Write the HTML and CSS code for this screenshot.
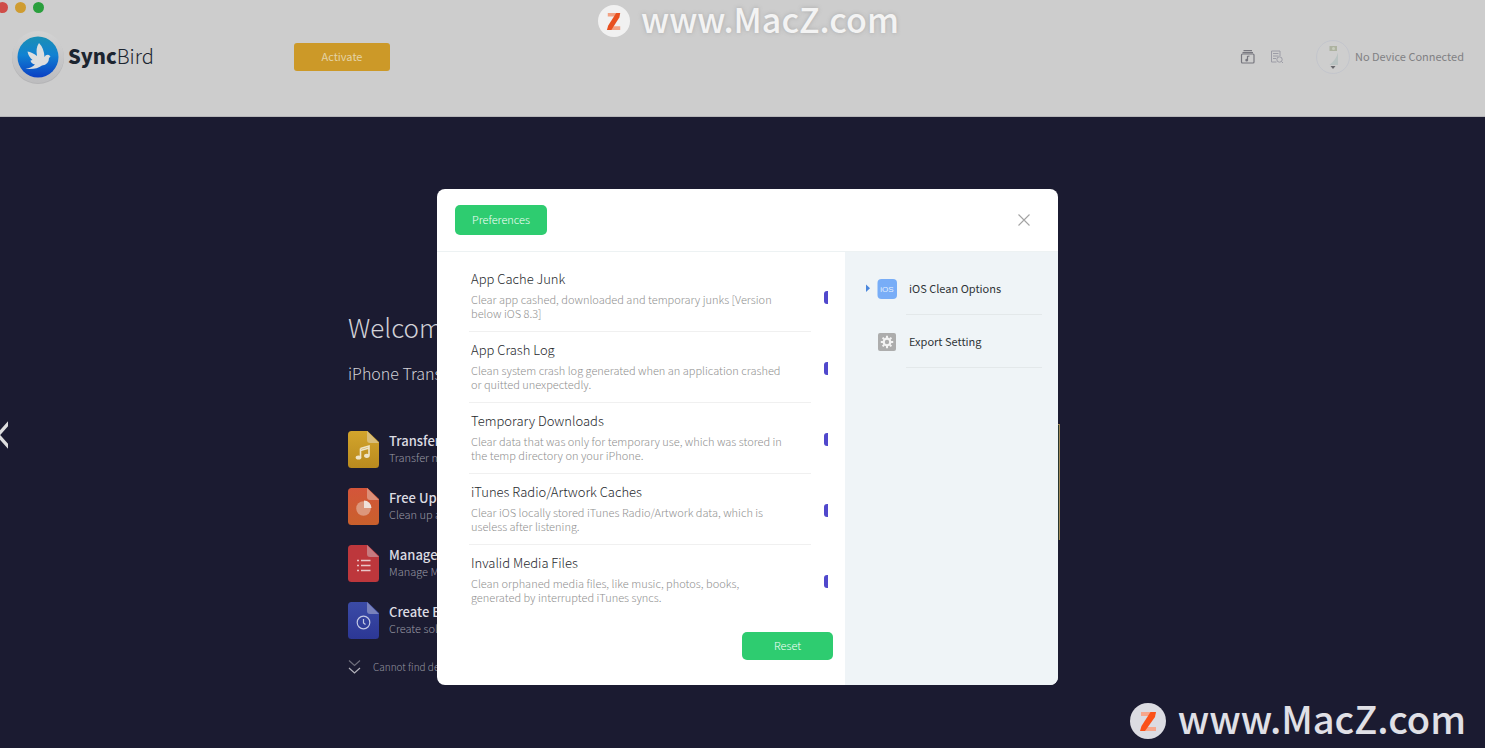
FILE: index.html
```html
<!DOCTYPE html>
<html lang="en">
<head>
<meta charset="utf-8">
<title>SyncBird</title>
<link rel="stylesheet" href="styles.css">
</head>
<body>
<header class="topbar">
  <div class="lights"><span class="light red"></span><span class="light amber"></span><span class="light green"></span></div>
  <div class="bar">
    <div class="brand">
      <svg class="brand-logo" width="54" height="54" viewBox="0 0 54 54" aria-hidden="true">
        <defs>
          <linearGradient id="blue" x1="0" y1="0" x2="0" y2="1"><stop offset="0" stop-color="#1b8fb4"/><stop offset=".45" stop-color="#1182d2"/><stop offset="1" stop-color="#0a3fc4"/></linearGradient>
          <linearGradient id="rim" x1="0" y1="0" x2="0" y2="1"><stop offset="0" stop-color="#d3d3d3"/><stop offset="1" stop-color="#bcbcbe"/></linearGradient>
        </defs>
        <circle cx="27" cy="28" r="26" fill="#b4b4b6"/>
        <circle cx="27" cy="27" r="26" fill="url(#rim)"/>
        <circle cx="27" cy="27" r="20.500" fill="url(#blue)"/>
        <path d="M14.500 38.800Q21 38 24 34.500Q20 33.500 19.500 30.500L21.500 30Q17.500 27 16.500 21.500Q21 22 26 26Q24.500 18 28 13Q33 18 33.500 27Q35 24 38 25L39.500 26.500L38 28Q38 34.500 31 35.500Q25 40 14.500 38.800Z" fill="#dcdedf"/>
      </svg>
      <span class="brand-name"><b>Sync</b>Bird</span>
    </div>
    <button class="activate" type="button">Activate</button>
    <div class="tools">
      <button class="tool" type="button" aria-label="Media library">
        <svg width="16" height="14" viewBox="0 0 16 14" fill="none" stroke="#77777f" stroke-width="1.200"><path d="M3.500 .7H12M2.500 2.600H13"/><rect x="1.500" y="4" width="12.500" height="9" rx="1"/><path d="M7.500 10.500V6.500L9.500 6"/><circle cx="6.700" cy="10.200" r=".8" fill="#55555c"/></svg>
      </button>
      <button class="tool" type="button" aria-label="History">
        <svg width="14" height="14" viewBox="0 0 14 14" fill="none" stroke="#9c9ca6"><path d="M6.500 12H1.500V1H10V6M3 3.500H8.500M3 6H8.500M3 8.500H6"/><circle cx="9.500" cy="9.500" r="2.700"/><path d="M11.500 11.500L13 13"/></svg>
      </button>
    </div>
    <div class="device">
      <svg width="34" height="34" viewBox="0 0 34 34" aria-hidden="true"><circle cx="17" cy="17" r="16.500" fill="#cecece" stroke="#c0c3cc" stroke-width=".8"/><path d="M13.500 6H21V11H13.500Z" fill="#adb2a0"/><circle cx="17.500" cy="8.500" r="1.500" fill="#c7cdbc"/><path d="M22 12.500V25H13.500Q20 20 22 12.500Z" fill="#b9c3c2"/><path d="M14.500 26H19.500L17 29Z" fill="#67676b"/></svg>
      <span>No Device Connected</span>
    </div>
  </div>
</header>

<main class="stage">
  <button class="prev" type="button" aria-label="Previous"><svg width="8" height="28" viewBox="0 0 8 28" fill="none" stroke="#dedede" stroke-width="3.200"><path d="M10 .5L-2 14L10 27.500"/></svg></button>
  <section class="welcome">
    <div class="intro">
      <h1>Welcome</h1>
      <h2>iPhone Transfer</h2>
      <ul class="features">
        <li>
          <svg width="31" height="37" viewBox="0 0 31 37"><defs><linearGradient id="gold" x1="0" y1="0" x2="0" y2="1"><stop offset="0" stop-color="#d3a52c"/><stop offset="1" stop-color="#b98a1e"/></linearGradient></defs><path d="M3.500 0H19.500L31 11V33.500Q31 37 27.500 37H3.500Q0 37 0 33.500V3.500Q0 0 3.500 0Z" fill="url(#gold)"/><path d="M19 0L31 12H22Q19 12 19 9Z" fill="#d8bd79"/><path d="M12.500 17.500L21 15V24.500M12.500 17.500V26.500M12.500 19.500L21 17" fill="none" stroke="#eee4c8" stroke-width="1.600"/><ellipse cx="10.500" cy="26.500" rx="2.800" ry="2.100" fill="#eee4c8"/><ellipse cx="18.800" cy="24.800" rx="2.800" ry="2.100" fill="#eee4c8"/></svg>
          <div><h3>Transfer</h3><p>Transfer music</p></div>
        </li>
        <li>
          <svg width="31" height="37" viewBox="0 0 31 37"><defs><linearGradient id="orange" x1="0" y1="0" x2="0" y2="1"><stop offset="0" stop-color="#d4553a"/><stop offset="1" stop-color="#c9602c"/></linearGradient></defs><path d="M3.500 0H19.500L31 11V33.500Q31 37 27.500 37H3.500Q0 37 0 33.500V3.500Q0 0 3.500 0Z" fill="url(#orange)"/><path d="M19 0L31 12H22Q19 12 19 9Z" fill="#dc9079"/><circle cx="15.500" cy="20.500" r="7.300" fill="#dc977c"/><path d="M16 20V12.500A7.500 7.500 0 0 1 23.500 20Z" fill="#efe2dc"/></svg>
          <div><h3>Free Up</h3><p>Clean up and</p></div>
        </li>
        <li>
          <svg width="31" height="37" viewBox="0 0 31 37"><path d="M3.500 0H19.500L31 11V33.500Q31 37 27.500 37H3.500Q0 37 0 33.500V3.500Q0 0 3.500 0Z" fill="#bd373c"/><path d="M19 0L31 12H22Q19 12 19 9Z" fill="#c77b80"/><path d="M9 15.500H11M13 15.500H22.500M9 20.500H11M13 20.500H22.500M9 25.500H11M13 25.500H22.500" stroke="#e9c6c8" stroke-width="1.500"/></svg>
          <div><h3>Manage</h3><p>Manage Media</p></div>
        </li>
        <li>
          <svg width="31" height="37" viewBox="0 0 31 37"><defs><linearGradient id="indigo" x1="0" y1="0" x2="0" y2="1"><stop offset="0" stop-color="#3b4ba6"/><stop offset="1" stop-color="#2c3795"/></linearGradient></defs><path d="M3.500 0H19.500L31 11V33.500Q31 37 27.500 37H3.500Q0 37 0 33.500V3.500Q0 0 3.500 0Z" fill="url(#indigo)"/><path d="M19 0L31 12H22Q19 12 19 9Z" fill="#7982bb"/><circle cx="15.500" cy="20.500" r="6.300" fill="none" stroke="#c3c8e4" stroke-width="1.200"/><path d="M15.500 17V21L17.500 22.500" fill="none" stroke="#c3c8e4" stroke-width="1.200"/></svg>
          <div><h3>Create Backup</h3><p>Create solid</p></div>
        </li>
      </ul>
      <a class="help" href="#help"><svg width="13" height="16" viewBox="0 0 13 16" fill="none" stroke-width="1.200"><path d="M1 1.500L6.500 6.500L12 1.500" stroke="#6e6e7b"/><path d="M1 9L6.500 14L12 9" stroke="#b2b2ba"/></svg><span>Cannot find device</span></a>
    </div>
    <div class="artwork"></div>
  </section>

  <div class="overlay">
    <div class="dialog" role="dialog" aria-label="Preferences">
      <div class="dialog-head">
        <button class="primary" type="button">Preferences</button>
        <button class="close" type="button" aria-label="Close"><svg width="12" height="12" viewBox="0 0 12 12" fill="none" stroke="#a3a3a3" stroke-width="1.100"><path d="M.5 .5L11.500 11.500M11.500 .5L.5 11.500"/></svg></button>
      </div>
      <div class="dialog-body">
        <form class="options">
          <div class="option"><label for="cache"><strong>App Cache Junk</strong><span>Clear app cashed, downloaded and temporary junks [Version<br>below iOS 8.3]</span></label><input id="cache" type="checkbox" checked></div>
          <div class="option"><label for="crash"><strong>App Crash Log</strong><span>Clean system crash log generated when an application crashed<br>or quitted unexpectedly.</span></label><input id="crash" type="checkbox" checked></div>
          <div class="option"><label for="temp"><strong>Temporary Downloads</strong><span>Clear data that was only for temporary use, which was stored in<br>the temp directory on your iPhone.</span></label><input id="temp" type="checkbox" checked></div>
          <div class="option"><label for="radio"><strong>iTunes Radio/Artwork Caches</strong><span>Clear iOS locally stored iTunes Radio/Artwork data, which is<br>useless after listening.</span></label><input id="radio" type="checkbox" checked></div>
          <div class="option"><label for="media"><strong>Invalid Media Files</strong><span>Clean orphaned media files, like music, photos, books,<br>generated by interrupted iTunes syncs.</span></label><input id="media" type="checkbox" checked></div>
          <button class="primary reset" type="reset">Reset</button>
        </form>
        <nav class="tabs">
          <a class="tab" href="#clean">
            <svg width="32" height="20" viewBox="0 0 32 20"><path d="M1 5.500L5 9.200L1 13Z" fill="#4a86dc"/><rect x="12.500" width="19.500" height="20" rx="4" fill="#78adf7"/><text class="badge" x="22" y="13" text-anchor="middle">iOS</text></svg>
            <span>iOS Clean Options</span>
          </a>
          <a class="tab" href="#export">
            <svg width="32" height="20" viewBox="0 0 32 20"><rect x="13" y="1" width="18" height="18" rx="2" fill="#adadad"/><g stroke="#f3f3f3"><circle cx="22" cy="10" r="3.300" fill="none" stroke-width="2.200"/><path d="M22 3.800V6M22 14V16.200M15.800 10H18M26 10H28.200M17.600 5.600L19.200 7.200M24.800 12.800L26.400 14.400M17.600 14.400L19.200 12.800M24.800 7.200L26.400 5.600" stroke-width="2"/></g></svg>
            <span>Export Setting</span>
          </a>
        </nav>
      </div>
    </div>
  </div>
</main>

<div class="mark mark-top"><svg viewBox="0 0 36 36"><circle cx="18" cy="18" r="18" fill="#f1f1f1"/><path d="M11 9H24V13H11ZM12 24H25V28H12Z" fill="#f2a183"/><path d="M20.500 9H25L24 14L15 28H10L11.500 23Z" fill="#e8501f"/></svg><span>www.MacZ.com</span></div>
<div class="mark mark-bottom"><svg viewBox="0 0 36 36"><circle cx="18" cy="18" r="18" fill="#dcdce2"/><path d="M11 9H25V13H11ZM12 24H26V28H12Z" fill="#f7a78c"/><path d="M20.500 9H26L25 14L15 28H10L11.500 23Z" fill="#fb5118"/></svg><span>www.MacZ.com</span></div>
</body>
</html>
```
FILE: styles.css
```css
* { box-sizing: border-box; }
body {
  margin: 0;
  min-height: 100vh;
  display: flex;
  flex-direction: column;
  position: relative;
  overflow: hidden;
  background: #1b1b31;
  font-family: "Noto Sans CJK SC", "Noto Sans", sans-serif;
  font-weight: 300;
  font-size: 12px;
}
button { border: 0; padding: 0; background: none; font: inherit; cursor: pointer; }
svg { display: block; flex: none; }
h1, h2, h3, p, ul { margin: 0; padding: 0; font-weight: 300; }
a { text-decoration: none; color: inherit; }

.topbar { height: 117px; background: #cdcdcd; border-bottom: 1px solid #b5b5b8; }
.lights { display: flex; gap: 7px; height: 29px; padding-top: 2px; margin-left: -3px; }
.light { width: 11px; height: 11px; border-radius: 50%; }
.red { background: #cf4d48; }
.amber { background: #cf9c30; }
.green { background: #2a9f3d; }
.bar { display: flex; align-items: center; height: 56px; padding: 0 21px 0 11px; }
.brand { display: flex; align-items: center; gap: 3px; width: 283px; }
.brand-name { padding-bottom: 4px; font-size: 20px; color: #1c2530; }
.brand-name b { font-weight: 900; }
.activate { width: 96px; height: 28px; padding-bottom: 3px; border-radius: 3px; background: #cc9928; color: #e4d3a6; font-weight: 400; font-size: 11px; }
.tools { display: flex; align-items: center; gap: 14px; margin-left: auto; margin-right: 32px; }
.device { display: flex; align-items: center; gap: 5px; font-size: 11px; font-weight: 400; color: #808083; }
.device span { padding-bottom: 3px; }

.stage { position: relative; flex: 1; }
.prev { position: absolute; left: 0; top: 304px; }
.welcome { display: flex; justify-content: space-between; width: 712px; margin-left: 348px; padding-top: 190px; color: #d2d2d8; }
h1 { font-size: 26px; line-height: 40px; }
h2 { font-size: 16px; line-height: 24px; margin-top: 14px; }
.features { list-style: none; display: grid; gap: 20px; margin-top: 46px; }
.features li { display: flex; align-items: center; gap: 10px; height: 37px; }
.features h3 { font-size: 13px; line-height: 16px; font-weight: 500; color: #dcdce2; }
.features p { font-size: 11px; line-height: 16px; padding-bottom: 2px; color: #9a9aa5; }
.help { display: flex; align-items: center; gap: 12px; margin-top: 20px; font-size: 10px; line-height: 16px; color: #9595a0; }
.artwork { width: 60px; height: 116px; margin-top: 117px; border: 1px solid #a08a5a; border-bottom: 0; background: #27362f; }

.overlay { position: absolute; inset: 0; display: flex; justify-content: center; align-items: flex-start; padding: 72px 0 0 10px; }
.dialog { width: 621px; border-radius: 8px; overflow: hidden; background: #fff; }
.dialog-head { display: flex; align-items: center; justify-content: space-between; height: 63px; padding: 0 28px 0 18px; border-bottom: 1px solid #edf2f3; }
.primary { width: 92px; height: 30px; padding-bottom: 3px; border-radius: 5px; background: #2ecc70; color: #f4fff8; font-size: 11px; }
.dialog-body { display: grid; grid-template-columns: 408px 1fr; }
.options { padding: 9px 12px 25px 32px; }
.option { display: flex; align-items: center; justify-content: space-between; padding-right: 5px; }
.option label { display: block; width: 342px; padding: 10px 0 11px 2px; border-bottom: 1px solid #f0f0f0; white-space: nowrap; }
.option:nth-child(5) label { border-color: transparent; }
.option strong { display: block; font-size: 13px; line-height: 16px; font-weight: 300; color: #26292d; }
.option span { display: block; margin-top: 5px; font-size: 11px; line-height: 14px; color: #909090; }
.option input { appearance: none; width: 4px; height: 13px; margin: 2px 0 0; border-radius: 3px 0 0 3px; background: #5048cc; }
.reset { display: block; width: 91px; height: 28px; margin: 16px 0 0 auto; }
.tabs { padding: 10px 16px 0 20px; background: #eff4f7; }
.tab { display: flex; align-items: center; gap: 12px; height: 53px; font-size: 11px; font-weight: 400; color: #303438; background: linear-gradient(#e3e8ea, #e3e8ea) right bottom / 136px 1px no-repeat; }
.tab span { padding-bottom: 1px; }
.badge { font-family: "Liberation Sans", sans-serif; font-size: 8px; fill: #e4effe; }

.mark { position: absolute; display: flex; align-items: flex-start; font-weight: 500; white-space: nowrap; }
.mark-top { left: 598px; top: 0; gap: 11px; font-size: 34px; line-height: 38px; color: #f3f3f3; text-shadow: 0 0 4px #a8a8a8; }
.mark-top svg { width: 32px; height: 32px; margin-top: 5px; }
.mark-bottom { right: 19px; bottom: 9px; gap: 12px; font-size: 38px; line-height: 42px; color: #e0e0e6; }
.mark-bottom svg { width: 36px; height: 36px; margin-top: 6px; }
```
